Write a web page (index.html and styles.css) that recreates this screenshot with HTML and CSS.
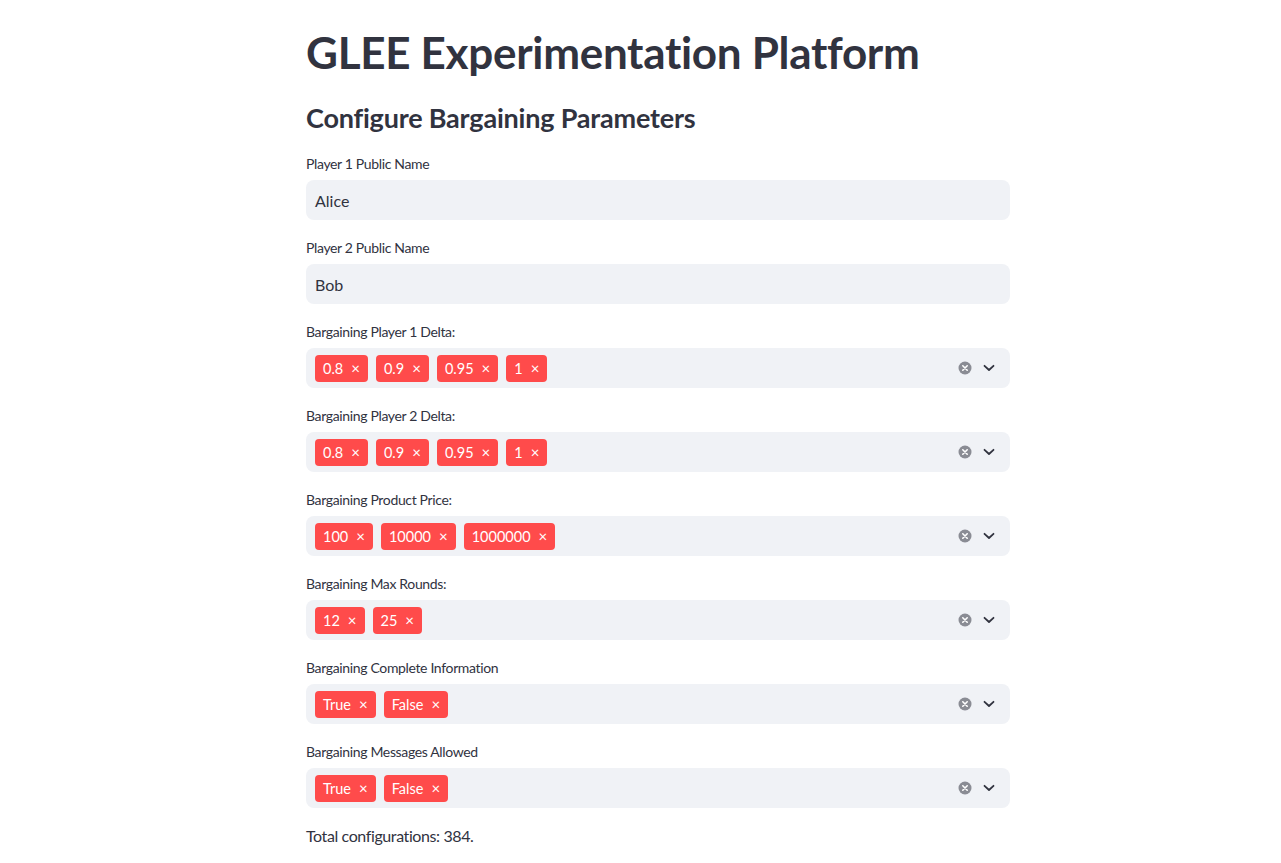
FILE: index.html
```html
<!DOCTYPE html>
<html>
<head>
<meta charset="utf-8">
<link rel="stylesheet" href="styles.css">
</head>
<body>
<div class="page">
  <main class="main">
    <h1 class="title">GLEE Experimentation Platform</h1>
    <h3 class="subheader">Configure Bargaining Parameters</h3>

    <div class="widget">
      <label class="label">Player 1 Public Name</label>
      <div class="input">Alice</div>
    </div>
    <div class="widget">
      <label class="label">Player 2 Public Name</label>
      <div class="input">Bob</div>
    </div>

    <div class="widget">
      <label class="label">Bargaining Player 1 Delta:</label>
      <div class="select">
        <div class="tags">
          <span class="tag">0.8<span class="x">×</span></span>
          <span class="tag">0.9<span class="x">×</span></span>
          <span class="tag">0.95<span class="x">×</span></span>
          <span class="tag">1<span class="x">×</span></span>
        </div>
        <div class="controls">
          <svg class="clear" width="14" height="14" viewBox="0 0 14 14"><circle cx="7" cy="7" r="6.5" fill="#8a8c94"/><path d="M4.8 4.8 L9.2 9.2 M9.2 4.8 L4.8 9.2" stroke="#fff" stroke-width="1.6" stroke-linecap="round"/></svg>
          <svg class="chev" width="12" height="8" viewBox="0 0 12 8"><path d="M1.5 1.8 L6 6 L10.5 1.8" fill="none" stroke="#31333f" stroke-width="1.8" stroke-linecap="round" stroke-linejoin="round"/></svg>
        </div>
      </div>
    </div>

    <div class="widget">
      <label class="label">Bargaining Player 2 Delta:</label>
      <div class="select">
        <div class="tags">
          <span class="tag">0.8<span class="x">×</span></span>
          <span class="tag">0.9<span class="x">×</span></span>
          <span class="tag">0.95<span class="x">×</span></span>
          <span class="tag">1<span class="x">×</span></span>
        </div>
        <div class="controls">
          <svg class="clear" width="14" height="14" viewBox="0 0 14 14"><circle cx="7" cy="7" r="6.5" fill="#8a8c94"/><path d="M4.8 4.8 L9.2 9.2 M9.2 4.8 L4.8 9.2" stroke="#fff" stroke-width="1.6" stroke-linecap="round"/></svg>
          <svg class="chev" width="12" height="8" viewBox="0 0 12 8"><path d="M1.5 1.8 L6 6 L10.5 1.8" fill="none" stroke="#31333f" stroke-width="1.8" stroke-linecap="round" stroke-linejoin="round"/></svg>
        </div>
      </div>
    </div>

    <div class="widget">
      <label class="label">Bargaining Product Price:</label>
      <div class="select">
        <div class="tags">
          <span class="tag">100<span class="x">×</span></span>
          <span class="tag">10000<span class="x">×</span></span>
          <span class="tag">1000000<span class="x">×</span></span>
        </div>
        <div class="controls">
          <svg class="clear" width="14" height="14" viewBox="0 0 14 14"><circle cx="7" cy="7" r="6.5" fill="#8a8c94"/><path d="M4.8 4.8 L9.2 9.2 M9.2 4.8 L4.8 9.2" stroke="#fff" stroke-width="1.6" stroke-linecap="round"/></svg>
          <svg class="chev" width="12" height="8" viewBox="0 0 12 8"><path d="M1.5 1.8 L6 6 L10.5 1.8" fill="none" stroke="#31333f" stroke-width="1.8" stroke-linecap="round" stroke-linejoin="round"/></svg>
        </div>
      </div>
    </div>

    <div class="widget">
      <label class="label">Bargaining Max Rounds:</label>
      <div class="select">
        <div class="tags">
          <span class="tag">12<span class="x">×</span></span>
          <span class="tag">25<span class="x">×</span></span>
        </div>
        <div class="controls">
          <svg class="clear" width="14" height="14" viewBox="0 0 14 14"><circle cx="7" cy="7" r="6.5" fill="#8a8c94"/><path d="M4.8 4.8 L9.2 9.2 M9.2 4.8 L4.8 9.2" stroke="#fff" stroke-width="1.6" stroke-linecap="round"/></svg>
          <svg class="chev" width="12" height="8" viewBox="0 0 12 8"><path d="M1.5 1.8 L6 6 L10.5 1.8" fill="none" stroke="#31333f" stroke-width="1.8" stroke-linecap="round" stroke-linejoin="round"/></svg>
        </div>
      </div>
    </div>

    <div class="widget">
      <label class="label">Bargaining Complete Information</label>
      <div class="select">
        <div class="tags">
          <span class="tag">True<span class="x">×</span></span>
          <span class="tag">False<span class="x">×</span></span>
        </div>
        <div class="controls">
          <svg class="clear" width="14" height="14" viewBox="0 0 14 14"><circle cx="7" cy="7" r="6.5" fill="#8a8c94"/><path d="M4.8 4.8 L9.2 9.2 M9.2 4.8 L4.8 9.2" stroke="#fff" stroke-width="1.6" stroke-linecap="round"/></svg>
          <svg class="chev" width="12" height="8" viewBox="0 0 12 8"><path d="M1.5 1.8 L6 6 L10.5 1.8" fill="none" stroke="#31333f" stroke-width="1.8" stroke-linecap="round" stroke-linejoin="round"/></svg>
        </div>
      </div>
    </div>

    <div class="widget">
      <label class="label">Bargaining Messages Allowed</label>
      <div class="select">
        <div class="tags">
          <span class="tag">True<span class="x">×</span></span>
          <span class="tag">False<span class="x">×</span></span>
        </div>
        <div class="controls">
          <svg class="clear" width="14" height="14" viewBox="0 0 14 14"><circle cx="7" cy="7" r="6.5" fill="#8a8c94"/><path d="M4.8 4.8 L9.2 9.2 M9.2 4.8 L4.8 9.2" stroke="#fff" stroke-width="1.6" stroke-linecap="round"/></svg>
          <svg class="chev" width="12" height="8" viewBox="0 0 12 8"><path d="M1.5 1.8 L6 6 L10.5 1.8" fill="none" stroke="#31333f" stroke-width="1.8" stroke-linecap="round" stroke-linejoin="round"/></svg>
        </div>
      </div>
    </div>

    <p class="total">Total configurations: 384.</p>
  </main>
</div>
</body>
</html>
```

FILE: styles.css
```css
* { box-sizing: border-box; }
html, body { margin: 0; padding: 0; background: #ffffff; }
body {
  font-family: "Lato", "Noto Sans", sans-serif;
  color: #31333f;
}
.page {
  padding-left: 35px;
}
.main {
  width: 704px;
  margin: 0 auto;
  display: flex;
  flex-direction: column;
  padding-top: 26px;
}
.title {
  margin: 0;
  font-size: 44px;
  font-weight: 700;
  line-height: 52px;
  letter-spacing: -0.3px;
}
.subheader {
  margin: 0;
  margin-top: 22px;
  font-size: 27px;
  font-weight: 700;
  line-height: 36px;
  letter-spacing: -0.2px;
}
.widget {
  display: flex;
  flex-direction: column;
  margin-bottom: 16px;
}
.subheader + .widget { margin-top: 16px; }
.label {
  font-size: 14px;
  line-height: 24px;
  height: 24px;
  margin-bottom: 4px;
  letter-spacing: -0.35px;
}
.input {
  height: 40px;
  background: #f0f2f6;
  border-radius: 8px;
  padding: 0 9px;
  display: flex;
  align-items: center;
  font-size: 16px;
}
.select {
  height: 40px;
  background: #f0f2f6;
  border-radius: 8px;
  padding: 0 15px 0 9px;
  display: flex;
  align-items: center;
  justify-content: space-between;
}
.tags {
  display: flex;
  gap: 8px;
}
.tag {
  height: 27px;
  background: #ff4b4b;
  color: #ffffff;
  border-radius: 4px;
  font-size: 14.5px;
  padding: 0 8px;
  display: flex;
  align-items: center;
}
.x {
  margin-left: 8px;
  font-size: 15px;
}
.controls {
  display: flex;
  align-items: center;
  gap: 11px;
}
.total {
  margin: 0;
  font-size: 16px;
  line-height: 24px;
  letter-spacing: -0.4px;
}
```
